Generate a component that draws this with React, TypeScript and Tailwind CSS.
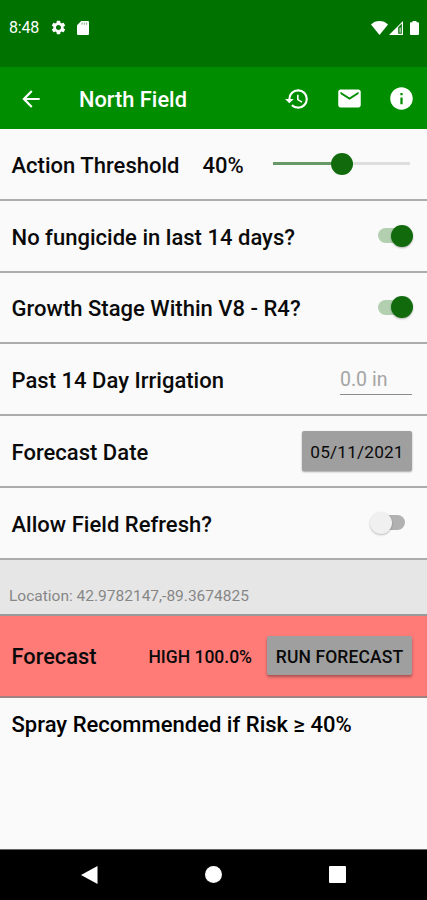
import type { ReactNode } from "react";
import { MdArrowBack, MdHistory, MdInfo, MdMail, MdSettings } from "react-icons/md";

function StatusBar() {
  return (
    <div className="h-[67px] bg-[#007200] text-white flex items-start justify-between pt-[18px] pl-[9px] pr-2">
      <div className="flex items-center h-[19px]">
        <span className="w-[41px] text-[16px] tracking-[-0.2px] pt-px">8:48</span>
        <MdSettings className="size-[17px]" />
        <svg viewBox="0 0 12 14" className="w-3 h-3.5 ml-[10px]" fill="currentColor">
          <path d="M4.2 0H11q1 0 1 1v12q0 1-1 1H1q-1 0-1-1V4.2z" />
          <path d="M5 1.5v2.2M7.3 1.5v2.2M9.6 1.5v2.2" stroke="#007200" strokeWidth="0.8" opacity="0.65" />
        </svg>
      </div>
      <div className="flex items-center h-[19px]">
        <svg viewBox="0 0 17 14" className="w-[17px] h-3.5" fill="currentColor">
          <path d="M8.5 14 0 3.4Q3.6 0 8.5 0T17 3.4z" />
        </svg>
        <svg viewBox="0 0 14 14" className="size-3.5 ml-px" fill="currentColor">
          <path d="M14 0v14H0z" />
          <path d="M9.2 6.2 12.8 2.6v10.2H9.2z" fill="#007200" />
          <path d="M10.6 6.5h1v5.2h-1z" />
        </svg>
        <svg viewBox="0 0 9 14" className="w-[9px] h-3.5 ml-[7px]" fill="currentColor">
          <path d="M2.5 0h4v1.3H8q1 0 1 1V13q0 1-1 1H1q-1 0-1-1V2.3q0-1 1-1h1.5z" />
        </svg>
      </div>
    </div>
  );
}

function AppBar() {
  return (
    <div className="h-[62px] bg-[#008d00] text-white flex items-center pl-[18px] pr-3 pt-px">
      <MdArrowBack className="size-[26px]" />
      <h1 className="ml-[35px] text-[21.8px] font-medium flex-1 whitespace-nowrap pt-[3px]">North Field</h1>
      <MdHistory className="size-[26px] mr-[26px]" />
      <MdMail className="size-[27px] mr-[25px]" />
      <MdInfo className="size-[27px]" />
    </div>
  );
}

function Row({ label, children }: { label: string; children?: ReactNode }) {
  return (
    <div className="h-[71.8px] border-b-2 border-[#acacac] flex items-center pl-[11.5px] pr-[15px]">
      <span className="text-[22px] font-medium tracking-[0.02px] whitespace-nowrap pt-[3px]">{label}</span>
      {children}
    </div>
  );
}

function Toggle({ on }: { on: boolean }) {
  if (on) {
    return (
      <div className="ml-auto mr-[-1px] w-[35px] h-[23px] flex items-center justify-end relative">
        <div className="absolute left-0 w-7 h-[15px] rounded-full bg-[#b2d0b0]" />
        <div className="relative size-[22px] rounded-full bg-[#116b0d] shadow-[0_1px_2px_rgba(0,0,0,0.3)]" />
      </div>
    );
  }
  return (
    <div className="ml-auto mr-[7px] w-[35px] h-[23px] flex items-center relative">
      <div className="absolute right-0 w-7 h-[15px] rounded-full bg-[#b1b1b1]" />
      <div className="relative size-[22px] rounded-full bg-[#f0f0f0] shadow-[0_1px_2px_rgba(0,0,0,0.25)]" />
    </div>
  );
}

export default function App() {
  return (
    <div className="w-full h-[900px] bg-[#fafafa] text-[#0a0a0a] font-[Roboto,sans-serif] flex flex-col overflow-hidden">
      <StatusBar />
      <AppBar />
      <Row label="Action Threshold">
        <span className="ml-[23px] text-[22px] font-medium pt-[3px]">40%</span>
        <div className="ml-auto mr-[2px] w-[137px] h-[22px] flex items-center relative">
          <div className="w-[69px] h-[3px] bg-[#679967]" />
          <div className="flex-1 h-[3px] bg-[#dedede]" />
          <div className="absolute left-[58px] size-[22px] rounded-full bg-[#116b0d]" />
        </div>
      </Row>
      <Row label="No fungicide in last 14 days?">
        <Toggle on />
      </Row>
      <Row label="Growth Stage Within V8 - R4?">
        <Toggle on />
      </Row>
      <Row label="Past 14 Day Irrigation">
        <div className="ml-auto w-[72px] h-[32px] border-b border-[#8c8c8c] text-[19.5px] leading-[34px] text-[#a5a5a5]">
          0.0 in
        </div>
      </Row>
      <Row label="Forecast Date">
        <button className="ml-auto w-[110px] h-[40px] rounded-[2px] bg-[#9f9f9f] shadow-[0_1px_2px_rgba(0,0,0,0.35)] text-[17.3px] tracking-[0.15px] pt-[3px]">
          05/11/2021
        </button>
      </Row>
      <Row label="Allow Field Refresh?">
        <Toggle on={false} />
      </Row>
      <div className="h-[56px] shrink-0 bg-[#e6e6e6] border-b-2 border-[#999] pl-[9px] pt-[26px] text-[15.5px] leading-[20px] text-[#868686]">
        Location: 42.9782147,-89.3674825
      </div>
      <div className="h-[82px] shrink-0 bg-[#ff7b78] border-b-2 border-[#a08080] flex items-center pl-[11.5px] pr-[15px]">
        <span className="text-[21.8px] font-medium pt-[3px]">Forecast</span>
        <span className="ml-auto mr-[15px] text-[17.5px] font-medium pt-[3px]">HIGH 100.0%</span>
        <button className="w-[145px] h-[39px] rounded-[2px] bg-[#9f9f9f] shadow-[0_2px_3px_rgba(0,0,0,0.35)] text-[17.5px] font-medium tracking-[0.1px] whitespace-nowrap pt-[2px]">
          RUN FORECAST
        </button>
      </div>
      <p className="flex-1 pl-[11.5px] pt-[12.5px] text-[22px] leading-[30px] font-medium tracking-[0.02px] whitespace-nowrap text-black">
        Spray Recommended if Risk ≥ 40%
      </p>
      <div className="h-[51px] shrink-0 bg-black border-t border-[#666] text-white flex items-center px-[81px] pb-px justify-between">
        <svg viewBox="0 0 17 18" className="w-[17px] h-[18px]" fill="currentColor">
          <path d="M16.5 0v18L0 9z" />
        </svg>
        <div className="size-[17px] rounded-full bg-white" />
        <div className="size-[17px] rounded-[1px] bg-white" />
      </div>
    </div>
  );
}
